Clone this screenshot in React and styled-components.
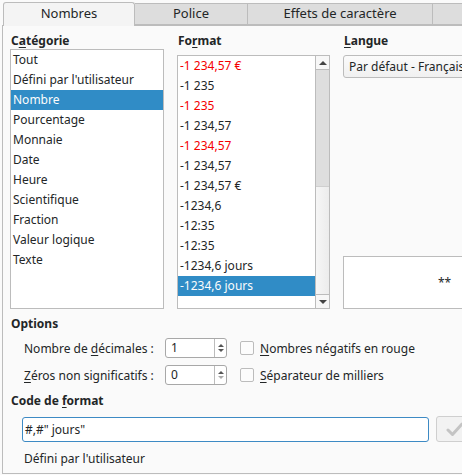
import React from "react";
import styled, { createGlobalStyle } from "styled-components";

const GlobalStyle = createGlobalStyle`
  html, body { margin: 0; padding: 0; background: #fafafa; }
  body { font-family: "Noto Sans", "Open Sans", sans-serif; font-size: 12px; color: #232627; }
  * { box-sizing: border-box; }
`;

const Dialog = styled.div`
  width: 462px;
  height: 475px;
  overflow: hidden;
  background: #fafafa;
  display: flex;
  flex-direction: column;
`;

const TabBar = styled.div`
  display: flex;
  align-items: flex-end;
  height: 25px;
  padding-left: 3px;
  position: relative;
  z-index: 1;
`;

const Tab = styled.div`
  flex: 0 0 ${(p) => p.$w}px;
  height: ${(p) => (p.$active ? 24 : 22)}px;
  margin-bottom: ${(p) => (p.$active ? -1 : 0)}px;
  display: flex;
  align-items: center;
  justify-content: center;
  font-size: 13px;
  color: #232627;
  background: ${(p) => (p.$active ? "#f4f4f4" : "#dddddd")};
  border: 1px solid #bcbcbc;
  border-bottom: ${(p) => (p.$active ? "none" : "1px solid #bcbcbc")};
  border-left: ${(p) => (p.$first ? "1px solid #bcbcbc" : "none")};
  border-radius: ${(p) => (p.$active ? "3px 3px 0 0" : "0")};
  padding-bottom: ${(p) => (p.$active ? 4 : 3)}px;
`;

const Panel = styled.div`
  flex: 1;
  margin-left: 2px;
  border-left: 1px solid #bcbcbc;
  border-top: 1px solid #bcbcbc;
  border-bottom: 1px solid #bcbcbc;
  margin-bottom: 1px;
  padding: 6px 0 0 7px;
  display: flex;
  flex-direction: column;
`;

const Columns = styled.div`
  display: grid;
  grid-template-columns: 154px 153px 1fr;
  column-gap: 13px;
  height: 277px;
  margin-right: -30px;
`;

const Column = styled.div`
  display: flex;
  flex-direction: column;
`;

const Heading = styled.div`
  font-weight: bold;
  font-size: 12px;
  height: 17px;
  line-height: 17px;
  padding-left: 1px;
  margin-bottom: ${(p) => p.$gap || 0}px;
  u { text-decoration-thickness: 1px; text-underline-offset: 2px; }
`;

const ListBox = styled.div`
  flex: 1;
  background: #ffffff;
  border: 1px solid #bcbcbc;
  display: flex;
  overflow: hidden;
`;

const Rows = styled.div`
  flex: 1;
  display: flex;
  flex-direction: column;
`;

const Row = styled.div`
  height: 20px;
  line-height: 20px;
  padding-left: 2px;
  white-space: nowrap;
  font-size: 12px;
  color: ${(p) => (p.$selected ? "#fcfcfc" : p.$red ? "#f50000" : "#232627")};
  background: ${(p) => (p.$selected ? "#308cc6" : "transparent")};
`;

const ScrollBar = styled.div`
  flex: 0 0 14px;
  border-left: 1px solid #bcbcbc;
  display: flex;
  flex-direction: column;
  background: linear-gradient(to right, #f6f6f6, #ececec);
`;

const ScrollButton = styled.div`
  height: 14px;
  display: flex;
  align-items: center;
  justify-content: center;
  background: #f7f7f7;
  border-${(p) => (p.$up ? "bottom" : "top")}: 1px solid #bcbcbc;
`;

const Arrow = styled.div`
  width: 0;
  height: 0;
  border-left: 4px solid transparent;
  border-right: 4px solid transparent;
  ${(p) => (p.$up ? "border-bottom" : "border-top")}: 4px solid #444;
`;

const Thumb = styled.div`
  height: 117px;
  background: #dedede;
  border-bottom: 1px solid #cfcfcf;
`;

const Track = styled.div`
  flex: 1;
`;

const Select = styled.div`
  height: 23px;
  border: 1px solid #bcbcbc;
  border-radius: 3px;
  background: linear-gradient(#fbfbfb, #f0f0f0);
  padding-left: 5px;
  line-height: 21px;
  font-size: 12px;
  white-space: nowrap;
  overflow: hidden;
`;

const Spacer = styled.div`
  flex: 1;
`;

const Preview = styled.div`
  height: 53px;
  border: 1px solid #bcbcbc;
  background: #ffffff;
  display: flex;
  align-items: center;
  padding-left: 94px;
  font-size: 12px;
`;

const Section = styled.div`
  margin-top: ${(p) => p.$top}px;
`;

const OptionGrid = styled.div`
  display: grid;
  grid-template-columns: 141px 62px auto;
  row-gap: 7px;
  padding-left: 14px;
  margin-top: 6px;
  align-items: center;
`;

const OptionLabel = styled.div`
  font-size: 12px;
  white-space: nowrap;
  u { text-decoration-thickness: 1px; text-underline-offset: 2px; }
`;

const Spin = styled.div`
  height: 20px;
  border: 1px solid #a8a8a8;
  border-radius: 3px;
  background: #ffffff;
  display: flex;
`;

const SpinValue = styled.div`
  flex: 1;
  padding-left: 5px;
  line-height: 18px;
  font-size: 12px;
`;

const SpinButtons = styled.div`
  flex: 0 0 12px;
  border-left: 1px solid #bcbcbc;
  display: flex;
  flex-direction: column;
  align-items: center;
  justify-content: center;
  gap: 2px;
`;

const SmallArrow = styled.div`
  width: 0;
  height: 0;
  border-left: 3px solid transparent;
  border-right: 3px solid transparent;
  ${(p) => (p.$up ? "border-bottom" : "border-top")}: 3px solid ${(p) => (p.$dim ? "#aaa" : "#555")};
`;

const Check = styled.label`
  display: flex;
  align-items: center;
  gap: 6px;
  margin-left: 13px;
  font-size: 12px;
  white-space: nowrap;
  u { text-decoration-thickness: 1px; text-underline-offset: 2px; }
`;

const Box = styled.span`
  width: 14px;
  height: 14px;
  border: 1px solid #bcbcbc;
  border-radius: 2px;
  background: #fcfcfc;
`;

const CodeRow = styled.div`
  display: flex;
  gap: 7px;
  padding-left: 12px;
  margin-top: 8px;
  margin-right: -30px;
`;

const CodeInput = styled.div`
  flex: 0 0 407px;
  height: 25px;
  border: 1px solid #3d8ac4;
  border-radius: 3px;
  background: #ffffff;
  padding-left: 2px;
  line-height: 23px;
  font-size: 12px;
`;

const ApplyButton = styled.div`
  flex: 0 0 34px;
  height: 26px;
  margin-top: -1px;
  border: 1px solid #cfcfcf;
  border-radius: 3px;
  background: #f2f2f2;
  display: flex;
  align-items: center;
  padding-left: 9px;
`;

const Footer = styled.div`
  padding-left: 14px;
  margin-top: 8px;
  font-size: 12px;
`;

const categories = [
  "Tout",
  "Défini par l'utilisateur",
  "Nombre",
  "Pourcentage",
  "Monnaie",
  "Date",
  "Heure",
  "Scientifique",
  "Fraction",
  "Valeur logique",
  "Texte",
];

const formats = [
  { t: "-1 234,57 €", red: true },
  { t: "-1 235" },
  { t: "-1 235", red: true },
  { t: "-1 234,57" },
  { t: "-1 234,57", red: true },
  { t: "-1 234,57" },
  { t: "-1 234,57 €" },
  { t: "-1234,6" },
  { t: "-12:35" },
  { t: "-12:35" },
  { t: "-1234,6 jours" },
  { t: "-1234,6 jours", sel: true },
];

const SpinBox = ({ value }) => (
  <Spin>
    <SpinValue>{value}</SpinValue>
    <SpinButtons>
      <SmallArrow $up />
      <SmallArrow $dim={value === "0"} />
    </SpinButtons>
  </Spin>
);

export default function App() {
  return (
    <>
      <GlobalStyle />
      <Dialog>
        <TabBar>
          <Tab $w={132} $active $first>Nombres</Tab>
          <Tab $w={113}>Police</Tab>
          <Tab $w={185}>Effets de caractère</Tab>
          <Tab $w={40} />
        </TabBar>
        <Panel>
          <Columns>
            <Column>
              <Heading $gap={0}>
                C<u>a</u>tégorie
              </Heading>
              <ListBox>
                <Rows>
                  {categories.map((c) => (
                    <Row key={c} $selected={c === "Nombre"}>
                      {c}
                    </Row>
                  ))}
                </Rows>
              </ListBox>
            </Column>
            <Column>
              <Heading $gap={6}>
                Fo<u>r</u>mat
              </Heading>
              <ListBox>
                <Rows>
                  {formats.map((f, i) => (
                    <Row key={i} $red={f.red} $selected={f.sel}>
                      {f.t}
                    </Row>
                  ))}
                </Rows>
                <ScrollBar>
                  <ScrollButton $up>
                    <Arrow $up />
                  </ScrollButton>
                  <Thumb />
                  <Track />
                  <ScrollButton>
                    <Arrow />
                  </ScrollButton>
                </ScrollBar>
              </ListBox>
            </Column>
            <Column>
              <Heading $gap={6}>
                <u>L</u>angue
              </Heading>
              <Select>Par défaut - Français (France)</Select>
              <Spacer />
              <Preview>**</Preview>
            </Column>
          </Columns>

          <Section $top={6}>
            <Heading>Options</Heading>
            <OptionGrid>
              <OptionLabel>
                Nombre de <u>d</u>écimales :
              </OptionLabel>
              <SpinBox value="1" />
              <Check>
                <Box />
                <span>
                  <u>N</u>ombres négatifs en rouge
                </span>
              </Check>
              <OptionLabel>
                <u>Z</u>éros non significatifs :
              </OptionLabel>
              <SpinBox value="0" />
              <Check>
                <Box />
                <span>
                  <u>S</u>éparateur de milliers
                </span>
              </Check>
            </OptionGrid>
          </Section>

          <Section $top={7}>
            <Heading>
              Code de <u>f</u>ormat
            </Heading>
            <CodeRow>
              <CodeInput>#,#" jours"</CodeInput>
              <ApplyButton>
                <svg width="18" height="16" viewBox="0 0 18 16">
                  <path
                    d="M2 9 L6.5 13.5 L16 3"
                    fill="none"
                    stroke="#c4c4c4"
                    strokeWidth="3"
                    strokeLinecap="round"
                    strokeLinejoin="round"
                  />
                </svg>
              </ApplyButton>
            </CodeRow>
            <Footer>Défini par l'utilisateur</Footer>
          </Section>
        </Panel>
      </Dialog>
    </>
  );
}
